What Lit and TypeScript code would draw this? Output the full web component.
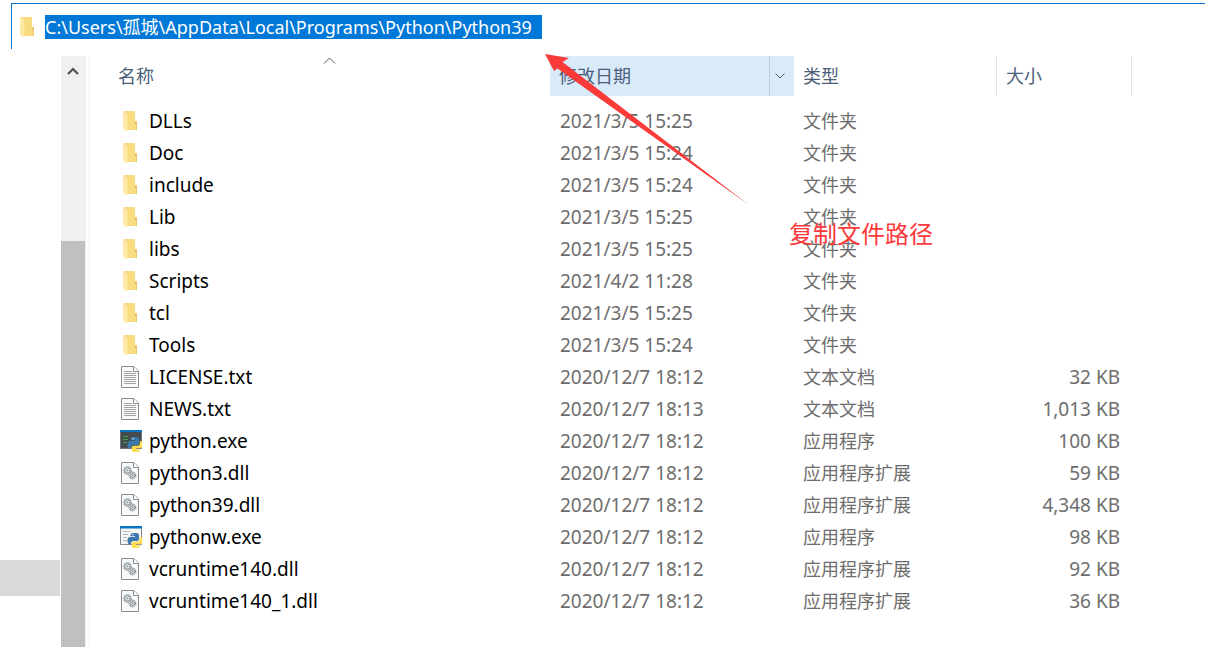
import { LitElement, html, css, svg } from "lit";
import { customElement, property } from "lit/decorators.js";

type Kind = "folder" | "text" | "console" | "window" | "library";

interface Entry {
  name: string;
  date: string;
  type: string;
  size: string;
  kind: Kind;
}

const folder = (name: string, date: string): Entry => ({ name, date, type: "文件夹", size: "", kind: "folder" });

const ENTRIES: Entry[] = [
  folder("DLLs", "2021/3/5 15:25"),
  folder("Doc", "2021/3/5 15:24"),
  folder("include", "2021/3/5 15:24"),
  folder("Lib", "2021/3/5 15:25"),
  folder("libs", "2021/3/5 15:25"),
  folder("Scripts", "2021/4/2 11:28"),
  folder("tcl", "2021/3/5 15:25"),
  folder("Tools", "2021/3/5 15:24"),
  { name: "LICENSE.txt", date: "2020/12/7 18:12", type: "文本文档", size: "32 KB", kind: "text" },
  { name: "NEWS.txt", date: "2020/12/7 18:13", type: "文本文档", size: "1,013 KB", kind: "text" },
  { name: "python.exe", date: "2020/12/7 18:12", type: "应用程序", size: "100 KB", kind: "console" },
  { name: "python3.dll", date: "2020/12/7 18:12", type: "应用程序扩展", size: "59 KB", kind: "library" },
  { name: "python39.dll", date: "2020/12/7 18:12", type: "应用程序扩展", size: "4,348 KB", kind: "library" },
  { name: "pythonw.exe", date: "2020/12/7 18:12", type: "应用程序", size: "98 KB", kind: "window" },
  { name: "vcruntime140.dll", date: "2020/12/7 18:12", type: "应用程序扩展", size: "92 KB", kind: "library" },
  { name: "vcruntime140_1.dll", date: "2020/12/7 18:12", type: "应用程序扩展", size: "36 KB", kind: "library" },
];

const snake = svg`
  <path fill="#3a78ad" d="M13 7h3.500q2.500 0 2.500 2.500v3.500q0 2-2 2h-3.500q-2.500 0-2.500 2.500v1h-1q-2.500 0-2.500-3.800 0-3.700 2.500-3.700h5v-.7h-4.500v-1q0-2.300 2.500-2.300z"/>
  <path fill="#ffdb4d" d="M17 22h-3q-2.500 0-2.500-2.300v-1.700q0-2.200 2.200-2.200h3.600q2.500 0 2.500-2.500v-2.300h.7q2 0 2 3.500t-2 3.700h-4.500v.7h3.700v.8q0 2.300-2.700 2.300z"/>
  <circle cx="13" cy="8.800" r=".7" fill="#fff"/><circle cx="17.500" cy="20.200" r=".7" fill="#fff"/>`;

const sheet = svg`
  <path fill="#fafafa" stroke="#8c8c8c" d="M1.500.5h12.500l4.500 4.500v16.500h-17z"/>
  <path fill="#fff" stroke="#8c8c8c" d="M13.500.5v5h5"/>`;

const gear = (cx: number, cy: number, r: number) => svg`
  <circle cx=${cx} cy=${cy} r=${r} fill="none" stroke="#8a949c" stroke-width="1.800" stroke-dasharray="1.300 .8"/>
  <circle cx=${cx} cy=${cy} r=${r - 1} fill="#e4eaee" stroke="#89949d" stroke-width=".9"/>
  <circle cx=${cx} cy=${cy} r=".8" fill="#7a858e"/>`;

const ICONS = {
  folder: svg`
    <path fill="#f9dc80" d="M4 1h11v10h2v9H6z"/>
    <path fill="#e9c668" d="M15 11h2v9h-1v-5h-1z"/>
    <path fill="#ffe9a6" d="M3 1l4.500 3.500V21.500L3 19z"/>`,
  text: svg`${sheet}
    <path stroke="#a3a3a3" d="M4 5.500h8M4 7.500h12M4 9.500h12M4 11.500h12M4 13.500h12M4 15.500h12M4 17.500h12"/>`,
  library: svg`${sheet}${gear(7.5, 8.5, 3.5)}${gear(12.5, 13.5, 3)}`,
  console: svg`
    <path fill="#444b4f" stroke="#6f7579" d="M.5.500h21v18H.5z"/>
    <path fill="#0c74c4" d="M0 0h22v2H0z"/>
    <path stroke="#3fa54b" stroke-width="1.200" d="M3 6.500h5M3 9.500h5M3 12.500h4"/>${snake}`,
  window: svg`
    <path fill="#f6f6f6" stroke="#85898c" d="M.5.500h21v18H.5z"/>
    <path fill="#0c74c4" d="M0 0h22v2.500H0z"/>
    <path stroke="#b9b9b9" d="M3 5.500h7M3 8.500h5M3 11.500h4M3 14.500h4"/>${snake}`,
};

@customElement("file-icon")
export class FileIcon extends LitElement {
  @property() kind: Kind = "folder";

  static styles = css`
    :host { display: block; flex: none; width: 22px; height: 22px; }
    svg { display: block; }
  `;

  render() {
    return html`<svg width="22" height="22" viewBox="0 0 22 22" fill="none" aria-hidden="true">${ICONS[this.kind]}</svg>`;
  }
}

@customElement("app-root")
export class AppRoot extends LitElement {
  static styles = css`
    :host {
      display: flex;
      flex-direction: column;
      position: relative;
      min-height: 100vh;
      overflow: hidden;
      box-sizing: border-box;
      padding-top: 3px;
      background: #fff;
      color: #6d6d6d;
      font: 19px/32px "Noto Sans", "Noto Sans CJK SC", sans-serif;
    }
    * { box-sizing: border-box; }
    button, input { font: inherit; color: inherit; border: 0; padding: 0; margin: 0; background: none; }
    .address {
      display: flex;
      align-items: center;
      height: 46px;
      margin-left: 11px;
      padding-left: 5px;
      gap: 6px;
      border: solid #0a78d4;
      border-width: 1px 0 0 1px;
    }
    .path {
      width: 497px;
      height: 24px;
      font-size: 18px;
      line-height: 24px;
      background: #0078d7;
      color: #fff;
      outline: 0;
    }
    .body { display: flex; flex: 1; margin-top: 7px; }
    .tree { display: flex; flex: none; flex-direction: column; justify-content: flex-end; width: 61px; padding: 0 1px 51px 0; }
    .node { height: 36px; background: #d9d9d9; }
    .scroll { display: flex; flex: none; flex-direction: column; width: 25px; background: #f0f0f0; }
    .up { height: 29px; width: 24px; display: grid; place-items: center; }
    .space { flex: 156; }
    .thumb { flex: 406; margin-right: 1px; background: #c0c0c0; }
    .list { flex: 1; min-width: 0; margin-left: 2px; padding-left: 20px; border-left: 2px solid #f7f7f7; }
    table { width: 1022px; table-layout: fixed; border-collapse: collapse; }
    .c-name { width: 440px; }
    .c-date { width: 244px; }
    .c-type { width: 203px; }
    th, td { padding: 0; font-weight: 400; text-align: left; white-space: nowrap; }
    th { height: 40px; color: #4c607a; font-size: 18px; }
    .head { display: flex; height: 40px; border-right: 1px solid #e2e2e2; }
    .head.plain { border-color: transparent; }
    .head.hot { background: #d9ebf9; border: 0; }
    .sort { flex: 1; padding-left: 9px; text-align: left; }
    .sorted { display: flex; align-items: flex-start; padding-left: 8px; }
    .sorted span { width: 205px; line-height: 40px; }
    .more { display: grid; place-items: center; width: 25px; padding-right: 4px; border-left: 1px solid #b5cfe3; }
    .caret { display: block; }
    tbody::before { content: ""; display: block; height: 9px; }
    td { height: 32px; padding-left: 10px; }
    .file { display: flex; align-items: center; gap: 7px; color: #000; }
    .type { padding-left: 9px; font-size: 18px; }
    .size { text-align: right; padding-right: 12px; }
    .arrow { position: absolute; left: 545px; top: 54px; pointer-events: none; }
    .note { position: absolute; left: 789px; top: 218px; color: #fb3a3a; font-size: 24px; white-space: nowrap; }
  `;

  render() {
    return html`
      <div class="address">
        <file-icon kind="folder"></file-icon>
        <input class="path" aria-label="地址" spellcheck="false"
          .value=${"C:\\Users\\孤城\\AppData\\Local\\Programs\\Python\\Python39"} />
      </div>
      <div class="body">
        <div class="tree"><div class="node"></div></div>
        <div class="scroll">
          <button class="up" aria-label="向上滚动">
            <svg width="12" height="10" viewBox="0 0 12 10" fill="none" stroke="#505050" stroke-width="2.200"><path d="M1 8l5-5 5 5"/></svg>
          </button>
          <div class="space"></div>
          <div class="thumb"></div>
        </div>
        <main class="list">
          <table>
            <colgroup><col class="c-name"><col class="c-date"><col class="c-type"><col></colgroup>
            <thead>
              <tr>
                <th scope="col"><div class="head plain">
                  <button class="sort sorted"><span>名称</span>
                    <svg class="caret" width="13" height="9" viewBox="0 0 13 9" fill="none" stroke="#555"><path d="M1 7.500l5.500-5.500L12 7.500"/></svg>
                  </button>
                </div></th>
                <th scope="col"><div class="head hot">
                  <button class="sort">修改日期</button>
                  <button class="more" aria-label="筛选">
                    <svg class="caret" width="12" height="8" viewBox="0 0 12 8" fill="none" stroke="#4c5a66"><path d="M1.500 1.500L6 6l4.500-4.500"/></svg>
                  </button>
                </div></th>
                <th scope="col"><div class="head"><button class="sort">类型</button></div></th>
                <th scope="col"><div class="head"><button class="sort">大小</button></div></th>
              </tr>
            </thead>
            <tbody>
              ${ENTRIES.map((e) => html`
                <tr>
                  <td><div class="file"><file-icon .kind=${e.kind}></file-icon>${e.name}</div></td>
                  <td>${e.date}</td>
                  <td class="type">${e.type}</td>
                  <td class="size">${e.size}</td>
                </tr>`)}
            </tbody>
          </table>
        </main>
      </div>
      <svg class="arrow" width="205" height="152" viewBox="0 0 205 152" aria-hidden="true">
        <path fill="#fb3a3a" d="M0 0l24 4-6.500 4L204 151 12.500 14.500 9 17z"/>
      </svg>
      <div class="note">复制文件路径</div>
    `;
  }
}
